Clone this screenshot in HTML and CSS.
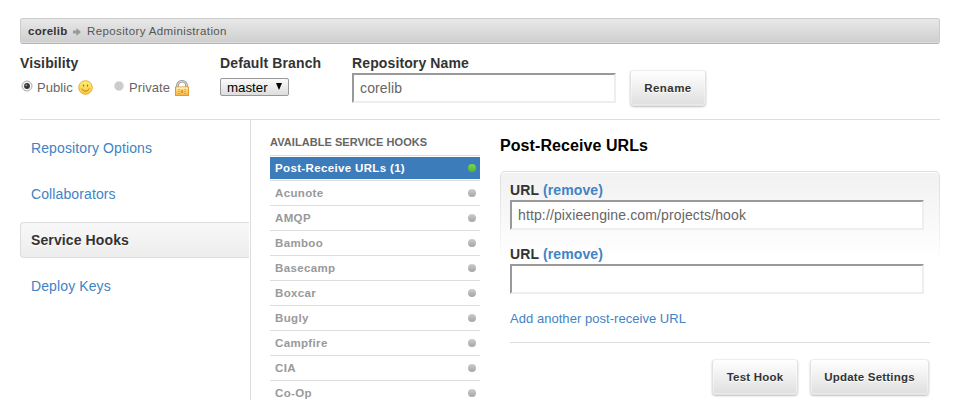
FILE: index.html
```html
<!DOCTYPE html>
<html lang="en">
<head>
<meta charset="utf-8">
<title>Repository Administration</title>
<link rel="stylesheet" href="styles.css">
</head>
<body>
<nav class="breadcrumb">
  <b>corelib</b>
  <svg class="arrow" width="8" height="8" viewBox="0 0 8 8"><path d="M0 2.5h3.5V0L8 4 3.5 8V5.5H0z" fill="#999"/></svg>
  <span>Repository Administration</span>
</nav>
<section class="settings">
  <div class="visibility">
    <h4>Visibility</h4>
    <div class="choices">
      <label class="choice public">
        <svg width="12" height="12" viewBox="0 0 12 12"><circle cx="6" cy="6" r="5" fill="#f4f4f4" stroke="#aaa"/><circle cx="6" cy="6" r="2.9" fill="#333"/><circle cx="5.3" cy="5.3" r="1" fill="#999"/></svg>
        <span>Public</span>
        <svg class="smile" width="15" height="15" viewBox="0 0 15 15"><defs><linearGradient id="face" x2="0" y2="1"><stop stop-color="#fff07a"/><stop offset="1" stop-color="#f9c63c"/></linearGradient></defs><circle cx="7.5" cy="7.5" r="6.8" fill="url(#face)" stroke="#e8ae3a"/><ellipse cx="5.5" cy="5.6" rx=".7" ry="1.1" fill="#9a6a1c"/><ellipse cx="9.5" cy="5.6" rx=".7" ry="1.1" fill="#9a6a1c"/><path d="M3.8 8.5c1 3.4 6.4 3.4 7.4 0" fill="none" stroke="#b27a20"/></svg>
      </label>
      <label class="choice private">
        <svg width="10" height="10" viewBox="0 0 10 10"><path d="M3 .5h4L9.5 3v4L7 9.5H3L.5 7V3z" fill="#ccc"/></svg>
        <span>Private</span>
        <svg class="lock" width="14" height="16" viewBox="0 0 14 16"><defs><linearGradient id="brass" x2="0" y2="1"><stop stop-color="#ffe89a"/><stop offset="1" stop-color="#f8b23c"/></linearGradient></defs><path d="M2.5 8V5.5a4.5 4.2 0 0 1 9 0V8" fill="none" stroke="#8c8c8c" stroke-width="2.6"/><path d="M2.5 8V5.5a4.5 4.2 0 0 1 9 0V8" fill="none" stroke="#d0d0d0" stroke-width="1.2"/><rect x=".5" y="7" width="13" height="8.5" fill="url(#brass)" stroke="#e59a2c"/><path d="M1.5 8h11" stroke="#fff6cf"/><path d="M3 9.5h2M3 11.5h2M3 13.5h2M9 9.5h2M9 11.5h2M9 13.5h2" stroke="#e9a947"/><path d="M7 10v3" stroke="#d08c2c" stroke-width="1.6"/></svg>
      </label>
    </div>
  </div>
  <div class="branch">
    <h4>Default Branch</h4>
    <button class="select"><span>master</span><svg width="6" height="7" viewBox="0 0 6 7"><path d="M0 0h6L3 7z"/></svg></button>
  </div>
  <div class="name">
    <h4>Repository Name</h4>
    <input type="text" value="corelib">
  </div>
  <button class="button rename"><span>Rename</span></button>
</section>
<main class="columns">
  <nav class="tabs">
    <a>Repository Options</a>
    <a>Collaborators</a>
    <a class="active">Service Hooks</a>
    <a>Deploy Keys</a>
  </nav>
  <section class="hooks">
    <h3>AVAILABLE SERVICE HOOKS</h3>
    <ul>
      <li class="current"><a><span>Post-Receive URLs (1)</span><i></i></a></li>
      <li><a><span>Acunote</span><i></i></a></li>
      <li><a><span>AMQP</span><i></i></a></li>
      <li><a><span>Bamboo</span><i></i></a></li>
      <li><a><span>Basecamp</span><i></i></a></li>
      <li><a><span>Boxcar</span><i></i></a></li>
      <li><a><span>Bugly</span><i></i></a></li>
      <li><a><span>Campfire</span><i></i></a></li>
      <li><a><span>CIA</span><i></i></a></li>
      <li><a><span>Co-Op</span><i></i></a></li>
    </ul>
  </section>
  <section class="detail">
    <h2>Post-Receive URLs</h2>
    <form class="panel">
      <div class="field"><h4>URL <a>(remove)</a></h4><input type="text" value="http://pixieengine.com/projects/hook"></div>
      <div class="field"><h4>URL <a>(remove)</a></h4><input type="text"></div>
      <a class="add">Add another post-receive URL</a>
      <div class="actions">
        <button type="button" class="button test"><span>Test Hook</span></button>
        <button type="button" class="button update"><span>Update Settings</span></button>
      </div>
    </form>
  </section>
</main>
</body>
</html>
```
FILE: styles.css
```css
* { box-sizing: border-box; }
body { margin: 0; padding: 18px 20px 0; height: 400px; overflow: hidden; background: #fff; color: #666; font: 13px/16px "Liberation Sans", sans-serif; }
h2, h3, h4, ul { margin: 0; padding: 0; }
a { color: #4183c4; }
svg { display: block; flex: none; }
h4 { height: 16px; color: #333; font-size: 14px; line-height: 16px; letter-spacing: .12px; white-space: nowrap; }

.breadcrumb { display: flex; align-items: center; height: 26px; padding-left: 7px; border: 1px solid #ccc; border-bottom-color: #b4b4b4; border-radius: 3px; background: linear-gradient(#e8e8e8, #cecece); box-shadow: inset 0 -1px #ddd; color: #555; font-size: 11.5px; letter-spacing: .38px; }
.breadcrumb b { width: 40px; color: #333; letter-spacing: .25px; }
.breadcrumb .arrow { margin: 1px 6px 0 5px; }

.settings { display: flex; height: 76px; padding-top: 11px; border-bottom: 1px solid #ddd; }
.visibility { width: 200px; }
.choices { display: flex; padding-top: 8px; }
.choice { display: flex; align-items: center; height: 17px; }
.public { width: 94px; padding-left: 1px; }
.public span { margin: 0 4px; width: 37px; letter-spacing: .08px; }
.private span { margin: 0 4px 0 5px; width: 42px; letter-spacing: .08px; }
.choice > svg:first-child { margin-top: -3px; }
.branch { width: 132px; }
.select { display: flex; align-items: center; justify-content: space-between; width: 69px; height: 18px; margin-top: 7px; padding: 0 6px; border: 1px solid #999; border-radius: 2px; background: linear-gradient(#fafafa, #ddd); color: #000; font: 13.3px "Liberation Sans", sans-serif; }
.select svg { margin-top: -1px; }
input { display: block; width: 264px; height: 30px; margin: 2px 0 0; padding: 0 6px; border: 2px solid; border-color: #999 #eee #eee #999; background: #fff; color: #666; font: 14px "Liberation Sans", sans-serif; letter-spacing: .13px; }
.name { width: 278px; }
.button { display: flex; align-items: center; justify-content: center; height: 36px; padding: 0 0 1px; border: 1px solid #e2e2e2; border-top-color: #eee; border-radius: 4px; background: linear-gradient(#fff, #dfdfdf); box-shadow: 0 1px 2px rgba(0,0,0,.25), inset 0 0 0 1px rgba(255,255,255,.35); color: #333; font: bold 11.5px "Liberation Sans", sans-serif; letter-spacing: .2px; text-shadow: 0 1px #fff; white-space: nowrap; }
.rename { width: 76px; margin-top: 15px; letter-spacing: .45px; }

.columns { display: grid; grid-template-columns: 231px 249px 440px; height: 280px; }
.tabs { display: flex; flex-direction: column; gap: 10px; padding: 10px 1px 0 0; border-right: 1px solid #ddd; font-size: 14px; letter-spacing: .11px; }
.tabs a { display: flex; align-items: center; height: 36px; padding: 0 0 0 11px; flex: none; }
.tabs .active { padding-left: 10px; border: 1px solid #ddd; border-right: 0; border-radius: 4px 0 0 4px; background: linear-gradient(#f8f8f8, #ededed); color: #333; font-weight: bold; text-shadow: 0 1px #fff; }

.hooks { height: 280px; overflow: hidden; padding: 15px 20px 0 19px; }
.hooks h3 { height: 20px; color: #666; font-size: 11px; line-height: 14px; letter-spacing: .06px; white-space: nowrap; }
.hooks ul { list-style: none; }
.hooks li { height: 25px; padding: 1px 0; border-top: 1px solid #ddd; }
.hooks li a { display: flex; align-items: center; justify-content: space-between; height: 22px; padding: 0 4px 0 5px; color: #999; font-size: 11.5px; font-weight: bold; letter-spacing: .35px; }
.hooks li i { width: 8px; height: 8px; border-radius: 50%; background: linear-gradient(#ccc, #a5a5a5); }
.hooks .current a { background: #3d7cba; color: #fff; }
.hooks .current i { background: linear-gradient(#7bd947, #54b52e); }

.detail h2 { height: 51px; padding-top: 17px; color: #000; font-size: 16px; line-height: 18px; letter-spacing: .08px; }
.panel { height: 229px; padding: 11px 10px 0; border-radius: 5px; position: relative; background: linear-gradient(#f1f1f1, #fff 90px); }
.panel::before { content: ""; position: absolute; inset: 0 0 auto; height: 100px; border: 1px solid #ddd; border-bottom: 0; border-radius: 5px 5px 0 0; box-shadow: inset 0 1px #fff; mask-image: linear-gradient(#000, transparent 90px); pointer-events: none; }
.field { height: 64px; }
.field input { width: 414px; }
.add { display: block; height: 33px; padding-top: 1px; border-bottom: 1px solid #ddd; line-height: 16px; letter-spacing: .04px; }
.actions { display: flex; justify-content: flex-end; gap: 12px; padding: 16px 1px 0 0; }
.test { width: 86px; }
.update { width: 119px; }
```
